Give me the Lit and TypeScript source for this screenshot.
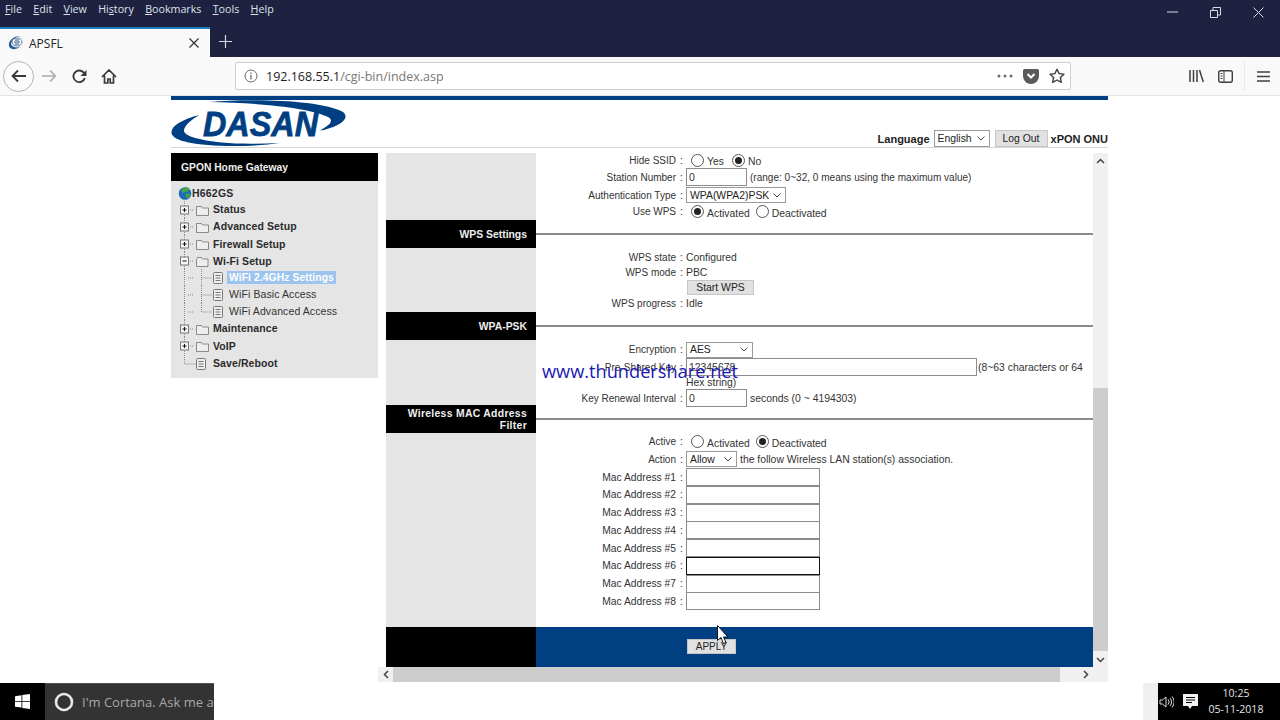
import { LitElement, html, css, svg } from "lit";
import { customElement } from "lit/decorators.js";

const MENU = [
  ["F", "ile"], ["E", "dit"], ["V", "iew"], ["Hi", "s", "tory"], ["B", "ookmarks"], ["T", "ools"], ["H", "elp"],
];

type TreeKind = "plus" | "minus" | "leaf" | "child" | "childlast";
interface TreeRow { label: string; kind: TreeKind; h: number; sel?: boolean; }
const TREE: TreeRow[] = [
  { label: "Status", kind: "plus", h: 17 },
  { label: "Advanced Setup", kind: "plus", h: 17 },
  { label: "Firewall Setup", kind: "plus", h: 18 },
  { label: "Wi-Fi Setup", kind: "minus", h: 16 },
  { label: "WiFi 2.4GHz Settings", kind: "child", h: 17, sel: true },
  { label: "WiFi Basic Access", kind: "child", h: 17 },
  { label: "WiFi Advanced Access", kind: "childlast", h: 17 },
  { label: "Maintenance", kind: "plus", h: 17 },
  { label: "VoIP", kind: "plus", h: 18 },
  { label: "Save/Reboot", kind: "leaf", h: 17 },
];

const MACS = [1, 2, 3, 4, 5, 6, 7, 8];

function treeIcon(r: TreeRow) {
  const dots = "#8a8a8a";
  const pageAt = (x: number) => svg`
    <rect x=${x} y="3.5" width="9" height="11" rx="1" fill="#eee" stroke="#777"/>
    <path d="M${x + 2} 6.5h5M${x + 2} 9h5M${x + 2} 11.5h5" stroke="#777"/>`;
  const vertical = r.kind === "leaf"
    ? svg`<path d="M8.5 0V9H20" stroke=${dots} stroke-dasharray="1 1" fill="none"/>`
    : svg`<path d="M8.5 0V18M12 9H18" stroke=${dots} stroke-dasharray="1 1" fill="none"/>`;
  let body;
  if (r.kind === "plus" || r.kind === "minus") {
    const open = r.kind === "minus";
    body = svg`
      <rect x="4.5" y="5" width="8" height="8" fill="#f4f4f4" stroke="#777"/>
      <path d=${open ? "M6.5 9h4" : "M6.5 9h4M8.5 7v4"} stroke="#111"/>
      ${open
        ? svg`<path d="M20.500 7.500l1-2h4l1 1.500h5.500v7.500h-11.500z" fill="#eee" stroke="#8a8a8a" stroke-linejoin="round"/>`
        : svg`<path d="M20.500 14.500v-9h5l1 1.500h6v7.500z" fill="#eee" stroke="#8a8a8a"/>`}`;
  } else if (r.kind === "leaf") {
    body = pageAt(20.5);
  } else {
    body = svg`
      <path d=${r.kind === "childlast" ? "M25.500 0V9H36" : "M25.500 0V18M25.500 9H36"} stroke=${dots} stroke-dasharray="1 1" fill="none"/>
      ${pageAt(37.5)}`;
  }
  const w = r.kind === "child" || r.kind === "childlast" ? 51 : 36;
  return html`<svg class="treeicon" width=${w} height="18" viewBox="0 0 ${w} 18">${vertical}${body}</svg>`;
}

@customElement("app-root")
export class AppRoot extends LitElement {
  static styles = css`
    :host { display: flex; flex-direction: column; width: 1280px; height: 720px; overflow: hidden; background: #fff; font-family: "Liberation Sans", Arial, sans-serif; color: #222; position: relative; }
    * { box-sizing: border-box; }
    svg { display: block; flex: none; }

    .titlebar { height: 57px; background: #1e2240; display: flex; flex-direction: column; flex: none; }
    .menurow { height: 27px; display: flex; align-items: flex-start; }
    .menu { display: flex; gap: 11.300px; padding: 2px 0 0 5px; font: 10.700px/15px "Open Sans", sans-serif; color: #dfe1ea; flex: 1; }
    .menu u { text-decoration-thickness: 1px; text-underline-offset: 1px; }
    .win { display: flex; gap: 0; }
    .win div { width: 43px; height: 24px; display: flex; align-items: center; justify-content: center; }
    .tabrow { height: 30px; display: flex; align-items: stretch; }
    .tab { width: 210px; background: #f9f9fa; border-top: 2px solid #1c7fc4; display: flex; align-items: center; padding-left: 8px; font: 12px "Open Sans", sans-serif; color: #222; }
    .tab .title { margin-left: 5px; flex: 1; }
    .tab .x { margin-right: 11px; }
    .plus { margin: 8px 0 0 9px; }

    .toolbar { height: 39px; flex: none; background: #f9f9fa; border-bottom: 1px solid #e3e3e5; display: flex; align-items: center; padding: 0 10px 0 3px; }
    .back { width: 31px; height: 31px; border: 1px solid #b4b4b6; border-radius: 50%; background: #fbfbfb; display: flex; align-items: center; justify-content: center; }
    .navbtn { width: 30px; display: flex; justify-content: center; }
    .urlbar { width: 836px; height: 28px; margin-left: 111px; background: #fff; border: 1px solid #cfcfd1; border-radius: 2px; display: flex; align-items: center; padding: 0 5px 0 8px; }
    .url { margin-left: 8px; font: 12.500px "Open Sans", sans-serif; color: #777; flex: 1; }
    .url b { font-weight: 400; color: #1c1c1c; }
    .urlicons { display: flex; align-items: center; gap: 10px; }
    .rtools { margin-left: auto; display: flex; align-items: center; }
    .lib { margin-right: 14px; }
    .rtools .sep { width: 1px; height: 30px; background: #e9e9ea; margin: 0 12px 0 11px; }

    .page { flex: 1; min-height: 0; padding-left: 171px; display: flex; flex-direction: column; }
    .site { width: 937px; display: flex; flex-direction: column; flex: 1; min-height: 0; }
    .bluebar { height: 4px; background: #003f82; flex: none; }
    .head { height: 48px; flex: none; border-bottom: 1px solid #d6d6d6; display: flex; align-items: flex-end; justify-content: space-between; }
    .headr { display: flex; align-items: center; font-size: 11px; font-weight: 700; color: #222; }
    .sel { height: 16px; border: 1px solid #9a9a9a; background: #fff; display: inline-flex; align-items: center; justify-content: space-between; padding: 0 4px 0 3px; font-size: 10.400px; font-weight: 400; color: #222; }
    .lang { width: 56px; height: 17px; margin: 0 5px 0 4px; }
    .btn { background: #e1e1e1; border: 1px solid #c6c6c6; font-size: 10.400px; font-weight: 400; color: #222; display: flex; align-items: center; justify-content: center; }
    .logout { width: 53px; height: 17px; margin-right: 3px; }

    .main { display: flex; margin-top: 5px; height: 530px; flex: none; }
    .side { width: 207px; height: 225px; background: #e5e5e5; flex: none; }
    .sidehead { height: 28px; background: #000; color: #eee; font-size: 10.300px; font-weight: 700; display: flex; align-items: center; padding-left: 10px; }
    .tree { padding: 5px 0 0 5px; font-size: 10.500px; font-weight: 700; color: #2b2b2b; }
    .root { display: flex; align-items: center; height: 15px; margin-left: 2px; padding-bottom: 1px; letter-spacing: .2px; }
    .trow { display: flex; align-items: center; }
    .trow span { margin-left: -1px; padding: 0 2px; line-height: 13px; letter-spacing: .1px; }
    .trow.child span { font-weight: 400; margin-left: 0; letter-spacing: .1px; color: #333; }
    .trow.child.selected span { background: #9cc4ef; color: #fff; font-weight: 700; font-size: 10.300px; }

    .frame { width: 730px; height: 529px; position: relative; display: grid; grid-template-columns: 1fr 15px; grid-template-rows: 1fr 15px; }
    .view { overflow: hidden; padding-left: 8px; font-size: 10.400px; color: #333; position: relative; }
    .block { display: grid; grid-template-columns: 150px 1fr; }
    .h67 { height: 67px; }
    .h64 { height: 64px; }
    .h65 { height: 65px; }
    .h194 { height: 194px; }
    .pt1 { padding-top: 1px; }
    .pt2 { padding-top: 2px; }
    .gray { background: #e5e5e5; }
    .rows { display: flex; flex-direction: column; }
    .r { display: grid; grid-template-columns: 141px 9px 1fr; align-items: center; }
    .r .k { text-align: right; white-space: nowrap; padding-right: 1px; font-size: 10px; }
    .r .k.mac { font-size: 10.300px; }
    .r .c { text-align: center; }
    .v { display: flex; align-items: center; white-space: nowrap; }
    .inp { height: 18px; background: #fff; border: 1px solid #8c8c8c; display: flex; align-items: center; padding-left: 2px; color: #333; }
    .radio { width: 13px; height: 13px; border: 1px solid #555; border-radius: 50%; background: #fff; display: flex; align-items: center; justify-content: center; flex: none; }
    .radio.on::after { content: ""; width: 7px; height: 7px; background: #222; border-radius: 50%; }
    .radios { display: flex; align-items: center; margin-left: 5px; }
    .rlabel { margin: 3px 6px 0 3px; }
    .rlabel.w { margin-right: 8px; }
    .after1 { margin-left: 1px; }
    .after3 { margin-left: 3px; }
    .range { margin-left: 3px; font-size: 10.050px; }
    .sechead { display: grid; grid-template-columns: 150px 1fr; height: 28px; }
    .sechead .t { background: #000; color: #eee; font-weight: 700; text-align: right; padding: 2px 9px 0 0; display: flex; align-items: center; justify-content: flex-end; line-height: 12px; }
    .sechead .t .long { letter-spacing: .3px; }
    .sechead .hr { display: flex; align-items: center; }
    .sechead .hr div { height: 2px; width: 100%; background: #8b8b8b; }
    .foot { display: grid; grid-template-columns: 150px 1fr; height: 40px; }
    .foot .l { background: #000; }
    .foot .b { background: #003f82; padding: 12px 0 0 151px; }
    .apply { width: 49px; height: 15px; font-size: 10px; }
    .wps { width: 67px; height: 15px; margin-left: 1px; }
    .watermark { position: absolute; left: 164px; top: 206px; font: 18.200px "Open Sans", sans-serif; color: #1a18b4; white-space: nowrap; }

    .vscroll { background: #f0f0f0; display: flex; flex-direction: column; justify-content: space-between; align-items: center; position: relative; }
    .vthumb { position: absolute; left: 0; right: 0; top: 235px; height: 263px; background: #cdcdcd; }
    .arrow { height: 15px; width: 15px; display: flex; align-items: center; justify-content: center; position: relative; }
    .hscroll { background: #f0f0f0; display: flex; align-items: center; }
    .hthumb { width: 667px; height: 15px; background: #cdcdcd; }
    .hscroll .gap { width: 18px; }
    .corner { background: #f0f0f0; }
    .cursor { position: absolute; left: 717px; top: 625px; }
    .logotext { stroke: #003f82; stroke-width: .8px; }

    .taskbar { height: 37px; flex: none; display: flex; justify-content: space-between; background: #fff; }
    .tleft { display: flex; width: 214px; }
    .start { width: 45px; background: #000; display: flex; align-items: center; justify-content: center; }
    .cortana { flex: 1; background: #333; overflow: hidden; display: flex; align-items: center; padding-left: 9px; border-top: 1px solid #555; color: #a8a8a8; font: 13px "Open Sans", sans-serif; white-space: nowrap; }
    .cortana svg { margin-right: 8px; }
    .tright { display: flex; width: 137px; }
    .tright .pad { width: 15px; background: #f0f0f0; }
    .tray { flex: 1; background: #000; color: #e6e6e6; display: flex; align-items: center; padding-left: 1px; }
    .note { margin-left: 9px; }
    .clock { flex: 1; text-align: center; font: 10.500px/16px "Open Sans", sans-serif; padding: 0 6px 2px 0; }
  `;

  private chevron(w = 8, color = "#444") {
    return html`<svg width=${w} height="5" viewBox="0 0 8 5"><path d="M.5.500L4 4l3.500-3.500" fill="none" stroke=${color}/></svg>`;
  }

  private logo() {
    return html`<svg class="logo" width="176" height="47" viewBox="0 0 176 47">
      <path d="M28 15C10 20 0 26 .500 33c1 8 24 13 62 13 18 0 34-1 46-3-22 1-42 1-58-.500C28 40 12 36 13 30c1-5 7-10 15-15z" fill="#003f82"/>
      <path d="M38 2C80-2 152 0 172 12c6 5 2 12-19 18l-4 .500c9-5 14-9 9-13C140 8 90 3 38 2z" fill="#003f82"/>
      <text class="logotext" x="32" y="36" font-family="Liberation Sans, Arial, sans-serif" font-weight="700" font-style="italic" font-size="35" fill="#003f82" textLength="115" lengthAdjust="spacingAndGlyphs">DASAN</text>
    </svg>`;
  }

  private radio(on: boolean, label: string, wide = false) {
    return html`<div class="radio ${on ? "on" : ""}"></div><span class="rlabel ${wide ? "w" : ""}">${label}</span>`;
  }

  private row(k: string, v: unknown, h: number, colon = true, mac = false) {
    return html`<div class="r" style="height:${h}px"><div class="k ${mac ? "mac" : ""}">${k}</div><div class="c">${colon ? ":" : ""}</div><div class="v">${v}</div></div>`;
  }

  private input(w: number, value = "", dark = false) {
    return html`<div class="inp" style="width:${w}px;${dark ? "border-color:#111" : ""}">${value}</div>`;
  }

  private select(w: number, label: string) {
    return html`<div class="sel" style="width:${w}px"><span>${label}</span>${this.chevron()}</div>`;
  }

  private chrome() {
    return html`
      <div class="titlebar">
        <div class="menurow">
          <div class="menu">
            ${MENU.map((m) => m.length === 3
              ? html`<span>${m[0]}<u>${m[1]}</u>${m[2]}</span>`
              : html`<span><u>${m[0]}</u>${m[1]}</span>`)}
          </div>
          <div class="win">
            <div><svg width="11" height="2"><path d="M0 1h11" stroke="#d8dae4"/></svg></div>
            <div><svg width="11" height="11"><path d="M.5 3.500h7v7h-7zM3 3V.5h7.500V8H8" fill="none" stroke="#d8dae4"/></svg></div>
            <div><svg width="11" height="11"><path d="M.5.500l10 10M10.500.500l-10 10" stroke="#d8dae4"/></svg></div>
          </div>
        </div>
        <div class="tabrow">
          <div class="tab">
            <svg width="16" height="16" viewBox="0 0 16 16"><path d="M1 11C0 6 5 1 13 1c-6 1-9 4-10 8 1 3 5 4 9 3-4 3-10 3-11-1z" fill="#2a5b93"/><ellipse cx="9" cy="7" rx="5" ry="4" fill="#fff" stroke="#5a7da6"/><path d="M6 7h6M7 5h4M7 9h4" stroke="#244f86"/></svg>
            <span class="title">APSFL</span>
            <svg class="x" width="10" height="10"><path d="M.5.500l9 9M9.500.500l-9 9" stroke="#333" stroke-width="1.200"/></svg>
          </div>
          <svg class="plus" width="13" height="13"><path d="M6.500 0v13M0 6.500h13" stroke="#d8dae4" stroke-width="1.200"/></svg>
        </div>
      </div>
      <div class="toolbar">
        <div class="back"><svg width="16" height="14" viewBox="0 0 16 14"><path d="M15 7H2M7 1.500L1.500 7 7 12.500" fill="none" stroke="#3a3a3c" stroke-width="1.800"/></svg></div>
        <div class="navbtn"><svg width="16" height="14" viewBox="0 0 16 14"><path d="M1 7h13M9 1.500L14.500 7 9 12.500" fill="none" stroke="#ababad" stroke-width="1.500"/></svg></div>
        <div class="navbtn"><svg width="15" height="15" viewBox="0 0 15 15"><path d="M12.800 9a5.800 5.800 0 1 1-1.300-5.600L13 5" fill="none" stroke="#3a3a3c" stroke-width="1.900"/><path d="M14.500 1v6h-6z" fill="#3a3a3c"/></svg></div>
        <div class="navbtn"><svg width="16" height="15" viewBox="0 0 16 15"><path d="M1 8l7-7 7 7M3.500 6.500V14h3.300v-4h2.400v4h3.300V6.500" fill="none" stroke="#3a3a3c" stroke-width="1.700"/></svg></div>
        <div class="urlbar">
          <svg width="14" height="14" viewBox="0 0 14 14"><circle cx="7" cy="7" r="6" fill="none" stroke="#6a6a6c"/><path d="M7 6v4.500M7 3.500v1.400" stroke="#6a6a6c" stroke-width="1.300"/></svg>
          <div class="url"><b>192.168.55.1</b>/cgi-bin/index.asp</div>
          <div class="urlicons">
            <svg width="16" height="4"><circle cx="2" cy="2" r="1.500" fill="#6a6a6c"/><circle cx="8" cy="2" r="1.500" fill="#6a6a6c"/><circle cx="14" cy="2" r="1.500" fill="#6a6a6c"/></svg>
            <svg width="16" height="15" viewBox="0 0 16 15"><path d="M1.500 0h13A1.500 1.500 0 0 1 16 1.500V7a8 8 0 0 1-16 0V1.500A1.500 1.500 0 0 1 1.500 0z" fill="#5a5a5c"/><path d="M4.500 5L8 8.500 11.500 5" fill="none" stroke="#fff" stroke-width="2"/></svg>
            <svg width="16" height="16" viewBox="0 0 16 16"><path d="M8 1.200l2.100 4.400 4.800.600-3.500 3.300.900 4.800L8 12l-4.300 2.300.900-4.800L1.100 6.200l4.800-.600z" fill="none" stroke="#3f3f41" stroke-width="1.400" stroke-linejoin="round"/></svg>
          </div>
        </div>
        <div class="rtools">
          <svg class="lib" width="15" height="14" viewBox="0 0 15 14"><path d="M1 1v12M4.500 1v12M8 1v12M10.500 1l3.800 12" fill="none" stroke="#3f3f41" stroke-width="1.500"/></svg>
          <svg width="15" height="13" viewBox="0 0 15 13"><rect x=".7" y=".7" width="13.600" height="11.600" rx="2" fill="none" stroke="#3f3f41" stroke-width="1.400"/><path d="M6 1v11M2.500 3.500h2M2.500 6h2M2.500 8.500h2" stroke="#3f3f41"/></svg>
          <div class="sep"></div>
          <svg width="13" height="11" viewBox="0 0 13 11"><path d="M0 1h13M0 5.500h13M0 10h13" stroke="#3f3f41" stroke-width="1.500"/></svg>
        </div>
      </div>`;
  }

  private sidebar() {
    return html`
      <div class="side">
        <div class="sidehead">GPON Home Gateway</div>
        <div class="tree">
          <div class="root">
            <svg width="14" height="14" viewBox="0 0 14 14"><circle cx="7" cy="7.500" r="6.300" fill="#1a6fb8"/><path d="M4 3c2-2 5-2.500 7-1 1 1 0 3-2 3.500S6 7 4.500 6.500 3 4 4 3zM8 8c2-.500 4 0 4.500 1-.500 2-2 3-3.500 3.500C8 11 7 9 8 8z" fill="#47a34a"/></svg>
            <span>H662GS</span>
          </div>
          ${TREE.map((r) => html`
            <div class="trow ${r.kind.startsWith("child") ? "child" : ""} ${r.sel ? "selected" : ""}" style="height:${r.h}px">
              ${treeIcon(r)}<span>${r.label}</span>
            </div>`)}
        </div>
      </div>`;
  }

  private content() {
    return html`
      <div class="view">
        <div class="block h67">
          <div class="gray"></div>
          <div class="rows">
            ${this.row("Hide SSID", html`<div class="radios">${this.radio(false, "Yes", true)}${this.radio(true, "No")}</div>`, 14)}
            ${this.row("Station Number", html`${this.input(61, "0")}<span class="range">(range: 0~32, 0 means using the maximum value)</span>`, 20)}
            ${this.row("Authentication Type", this.select(100, "WPA(WPA2)PSK"), 16)}
            ${this.row("Use WPS", html`<div class="radios">${this.radio(true, "Activated")}${this.radio(false, "Deactivated")}</div>`, 17)}
          </div>
        </div>
        <div class="sechead"><div class="t">WPS Settings</div><div class="hr"><div></div></div></div>
        <div class="block h64">
          <div class="gray"></div>
          <div class="rows pt2">
            ${this.row("WPS state", "Configured", 14)}
            ${this.row("WPS mode", "PBC", 16)}
            ${this.row("", html`<div class="btn wps">Start WPS</div>`, 15, false)}
            ${this.row("WPS progress", "Idle", 17)}
          </div>
        </div>
        <div class="sechead"><div class="t">WPA-PSK</div><div class="hr"><div></div></div></div>
        <div class="block h65">
          <div class="gray"></div>
          <div class="rows pt1">
            ${this.row("Encryption", this.select(67, "AES"), 17)}
            ${this.row("Pre-Shared Key", html`${this.input(291, "12345678")}<span class="after1">(8~63 characters or 64</span>`, 18)}
            ${this.row("", "Hex string)", 13, false)}
            ${this.row("Key Renewal Interval", html`${this.input(61, "0")}<span class="after3">seconds (0 ~ 4194303)</span>`, 16)}
          </div>
        </div>
        <div class="sechead"><div class="t"><span class="long">Wireless MAC Address<br />Filter</span></div><div class="hr"><div></div></div></div>
        <div class="block h194">
          <div class="gray"></div>
          <div class="rows">
            ${this.row("Active", html`<div class="radios">${this.radio(false, "Activated")}${this.radio(true, "Deactivated")}</div>`, 17)}
            ${this.row("Action", html`${this.select(51, "Allow")}<span class="after3">the follow Wireless LAN station(s) association.</span>`, 18)}
            ${MACS.map((n) => this.row(`Mac Address #${n}`, this.input(134, "", n === 6), 17.75, true, true))}
          </div>
        </div>
        <div class="foot"><div class="l"></div><div class="b"><div class="btn apply">APPLY</div></div></div>
        <div class="watermark">www.thundershare.net</div>
      </div>
      <div class="vscroll">
        <div class="arrow"><svg width="9" height="6" viewBox="0 0 9 6"><path d="M1 5l3.500-3.500L8 5" fill="none" stroke="#444" stroke-width="1.500"/></svg></div>
        <div class="vthumb"></div>
        <div class="arrow"><svg width="9" height="6" viewBox="0 0 9 6"><path d="M1 1l3.500 3.500L8 1" fill="none" stroke="#444" stroke-width="1.500"/></svg></div>
      </div>
      <div class="hscroll">
        <div class="arrow"><svg width="6" height="9" viewBox="0 0 6 9"><path d="M5 1L1.500 4.500 5 8" fill="none" stroke="#444" stroke-width="1.500"/></svg></div>
        <div class="hthumb"></div>
        <div class="gap"></div>
        <div class="arrow"><svg width="6" height="9" viewBox="0 0 6 9"><path d="M1 1l3.500 3.500L1 8" fill="none" stroke="#444" stroke-width="1.500"/></svg></div>
      </div>
      <div class="corner"></div>`;
  }

  render() {
    return html`
      ${this.chrome()}
      <div class="page">
        <div class="site">
          <div class="bluebar"></div>
          <div class="head">
            ${this.logo()}
            <div class="headr">
              <span>Language</span>
              <div class="sel lang"><span>English</span>${this.chevron()}</div>
              <div class="btn logout">Log Out</div>
              <span>xPON ONU</span>
            </div>
          </div>
          <div class="main">
            ${this.sidebar()}
            <div class="frame">${this.content()}</div>
          </div>
        </div>
      </div>
      <div class="taskbar">
        <div class="tleft">
          <div class="start"><svg width="15" height="15" viewBox="0 0 15 15"><path d="M0 2.200l6.500-1V7H0zM7.300 1l7.700-1v7H7.300zM0 7.800h6.500v5.800L0 12.700zM7.300 7.800H15V15l-7.700-1.100z" fill="#fff"/></svg></div>
          <div class="cortana">
            <svg width="20" height="20" viewBox="0 0 20 20"><circle cx="10" cy="10" r="8" fill="none" stroke="#e8e8e8" stroke-width="2.600"/></svg>
            <span>I'm Cortana. Ask me a</span>
          </div>
        </div>
        <div class="tright">
          <div class="pad"></div>
          <div class="tray">
            <svg width="15" height="14" viewBox="0 0 15 14"><path d="M1 5h2.500L7 2v10L3.500 9H1zM9 4.500a3.500 3.500 0 0 1 0 5M11 3a6 6 0 0 1 0 8M13 1.500a8 8 0 0 1 0 11" fill="none" stroke="#ddd"/></svg>
            <svg class="note" width="15" height="16" viewBox="0 0 15 16"><path d="M0 0h15v12H9l-2 3-2-3H0z" fill="#f2f2f2"/><path d="M3 3.500h9M3 6h9M3 8.500h6" stroke="#000"/></svg>
            <div class="clock">10:25<br />05-11-2018</div>
          </div>
        </div>
      </div>
      <svg class="cursor" width="12" height="19" viewBox="0 0 12 19"><path d="M.5.500v15l3.500-3 2.500 6 2.500-1-2.500-5.500h4.500z" fill="#fff" stroke="#111"/></svg>
    `;
  }
}
